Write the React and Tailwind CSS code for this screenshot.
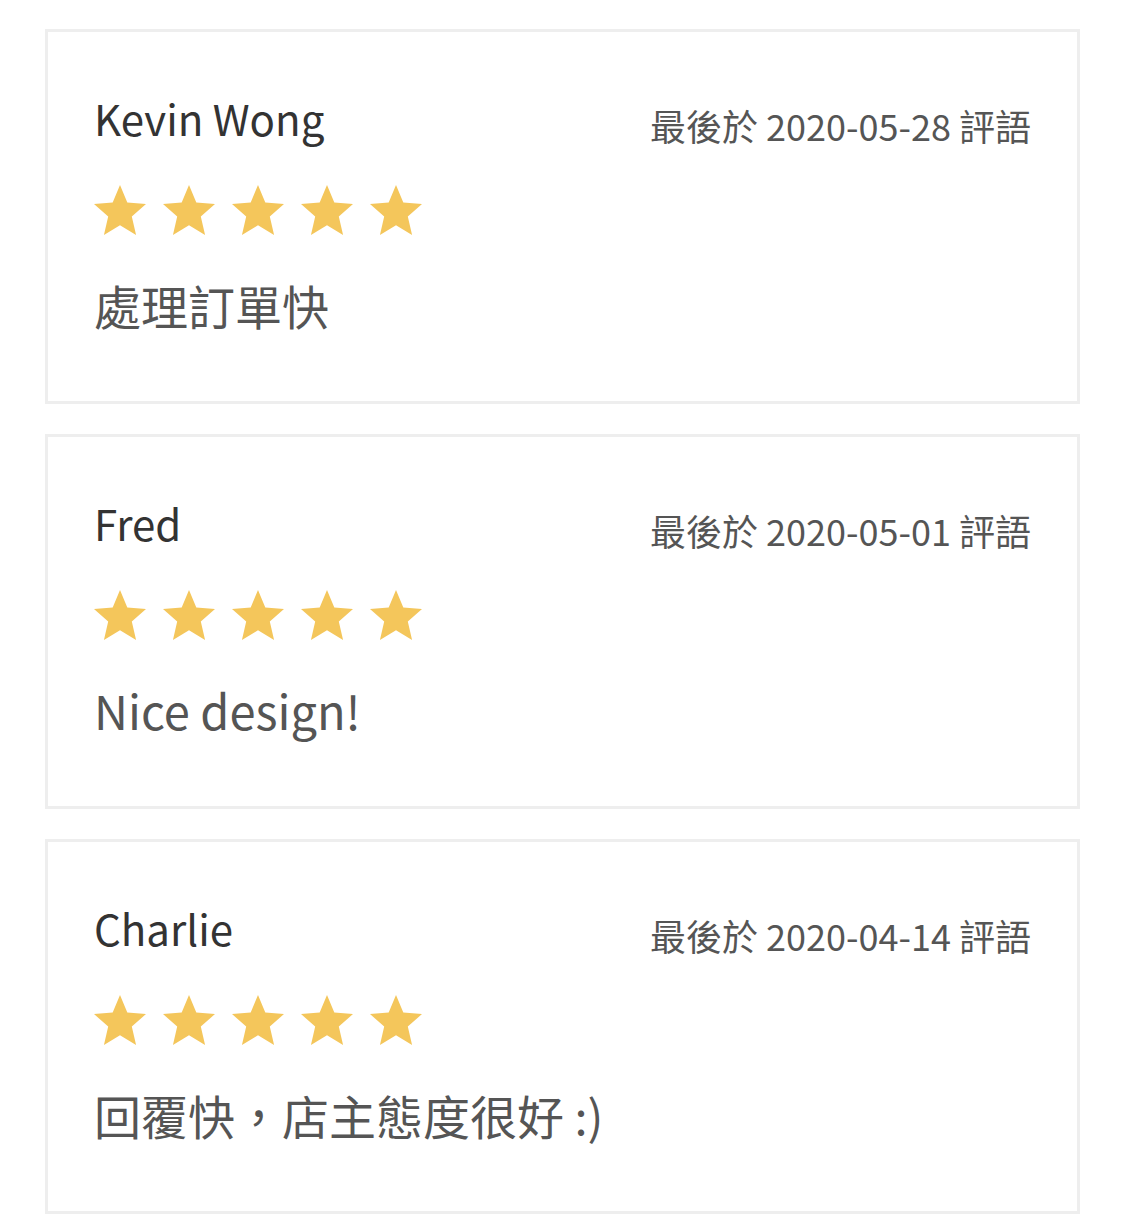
import React from 'react';

const reviews = [
  { name: 'Kevin Wong', date: '2020-05-28', rating: 5, comment: '處理訂單快' },
  { name: 'Fred', date: '2020-05-01', rating: 5, comment: 'Nice design!' },
  { name: 'Charlie', date: '2020-04-14', rating: 5, comment: '回覆快，店主態度很好 :)' },
];

const Star = () => (
  <svg viewBox="2 2 20 19" className="w-[52px] h-[50px] shrink-0" preserveAspectRatio="none">
    <path
      fill="#f4c65b"
      d="M12 17.27L18.18 21l-1.64-7.03L22 9.24l-7.19-.61L12 2 9.19 8.63 2 9.24l5.46 4.73L5.82 21z"
    />
  </svg>
);

const ReviewCard = ({ review }) => (
  <div className="border-[3px] border-[#eeeeee] bg-white px-[46px] pt-[65px] pb-[73px]">
    <div className="flex items-start justify-between h-[43px]">
      <h4 className="text-[42px] leading-none text-[#333333]">{review.name}</h4>
      <span className="mt-[10px] text-[36px] leading-none text-[#555555]">
        最後於 {review.date} 評語
      </span>
    </div>
    <div className="flex items-center gap-[17px] mt-[45px]">
      {Array.from({ length: review.rating }).map((_, i) => (
        <Star key={i} />
      ))}
    </div>
    <p className="mt-[46px] text-[47px] leading-none text-[#555555]">{review.comment}</p>
  </div>
);

export default function App() {
  return (
    <div className="min-h-[1226px] bg-white px-[45px] pt-[29px] font-['Noto_Sans_CJK_TC','Noto_Sans',sans-serif]">
      <div className="flex flex-col gap-[30px]">
        {reviews.map((r) => (
          <ReviewCard key={r.name} review={r} />
        ))}
      </div>
    </div>
  );
}
